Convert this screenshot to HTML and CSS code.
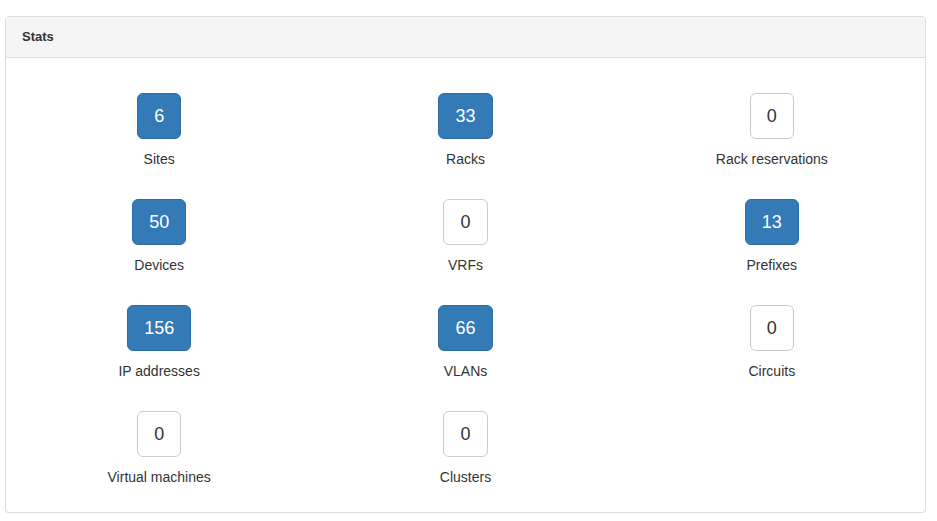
FILE: index.html
```html
<!DOCTYPE html>
<html>
<head>
<meta charset="utf-8">
<title>Stats</title>
<link rel="stylesheet" href="styles.css">
</head>
<body>
<div class="panel">
  <div class="panel-heading">Stats</div>
  <div class="panel-body">
    <div class="stat"><a class="btn primary">6</a><div class="label">Sites</div></div>
    <div class="stat"><a class="btn primary">33</a><div class="label">Racks</div></div>
    <div class="stat"><a class="btn">0</a><div class="label">Rack reservations</div></div>
    <div class="stat"><a class="btn primary">50</a><div class="label">Devices</div></div>
    <div class="stat"><a class="btn">0</a><div class="label">VRFs</div></div>
    <div class="stat"><a class="btn primary">13</a><div class="label">Prefixes</div></div>
    <div class="stat"><a class="btn primary">156</a><div class="label">IP addresses</div></div>
    <div class="stat"><a class="btn primary">66</a><div class="label">VLANs</div></div>
    <div class="stat"><a class="btn">0</a><div class="label">Circuits</div></div>
    <div class="stat"><a class="btn">0</a><div class="label">Virtual machines</div></div>
    <div class="stat"><a class="btn">0</a><div class="label">Clusters</div></div>
  </div>
</div>
</body>
</html>
```
FILE: styles.css
```css
html, body {
  margin: 0;
  padding: 0;
  background: #fff;
}
body {
  font-family: "Liberation Sans", Arial, sans-serif;
  font-size: 14px;
  line-height: 20px;
  color: #333;
  padding: 16px 11px 0 5px;
}
.panel {
  border: 1px solid #ddd;
  border-radius: 4px;
  background: #fff;
  box-shadow: 0 1px 1px rgba(0,0,0,0.05);
}
.panel-heading {
  background: #f5f5f5;
  border-bottom: 1px solid #ddd;
  border-radius: 3px 3px 0 0;
  padding: 10px 16px;
  font-size: 13px;
  font-weight: bold;
  line-height: 20px;
}
.panel-body {
  display: grid;
  grid-template-columns: repeat(3, 1fr);
  padding: 14px 0 16px;
}
.stat {
  display: flex;
  flex-direction: column;
  align-items: center;
  padding: 21px 0 9px;
}
.btn {
  display: inline-block;
  box-sizing: border-box;
  font-size: 18px;
  line-height: 24px;
  padding: 10px 16px;
  border: 1px solid #ccc;
  border-radius: 6px;
  background: #fff;
  color: #333;
  min-width: 44px;
  text-align: center;
}
.btn.primary {
  background: #337ab7;
  border-color: #2e6da4;
  color: #fff;
}
.label {
  margin-top: 10px;
  line-height: 20px;
}
```
